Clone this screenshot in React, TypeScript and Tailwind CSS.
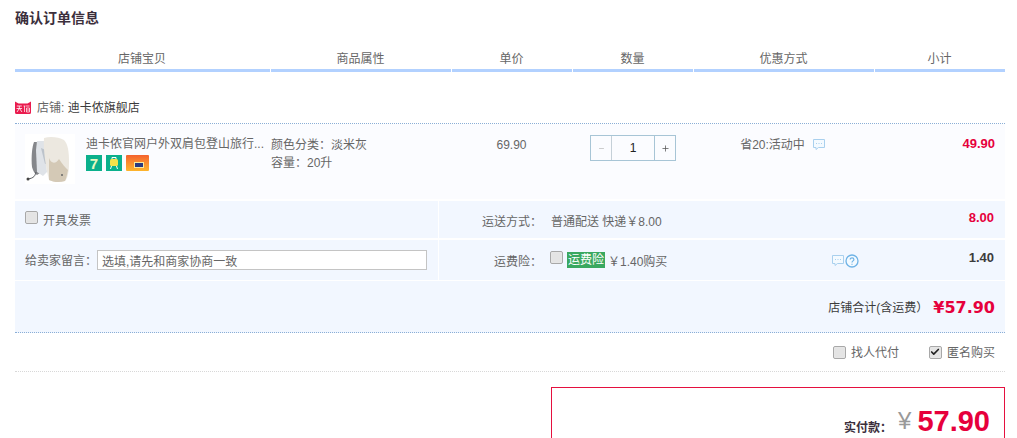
import { Check, Plus, Minus } from 'lucide-react';

const font = { fontFamily: '"Liberation Sans", "Noto Sans CJK SC", sans-serif' };

const columns = [
  { label: '店铺宝贝', width: 'w-[255px]' },
  { label: '商品属性', width: 'w-[180px]' },
  { label: '单价', width: 'w-[120px]' },
  { label: '数量', width: 'w-[120px]' },
  { label: '优惠方式', width: 'w-[180px]' },
  { label: '小计', width: 'w-[130px]' },
];

function ChatIcon({ className }: { className?: string }) {
  return (
    <svg viewBox="0 0 14 13" className={className} fill="none">
      <path d="M1.5 1.5h11v8h-6l-2.5 2v-2h-2.500z" stroke="#a9d0ee" strokeWidth="1" fill="#f4faff" />
      <path d="M4 5.500h1M6.500 5.500h1M9 5.500h1" stroke="#a9d0ee" strokeWidth="1" />
    </svg>
  );
}

function HelpIcon() {
  return (
    <svg viewBox="0 0 14 14" className="h-[14px] w-[14px]" fill="none">
      <circle cx="7" cy="7" r="6" stroke="#6fb3e6" strokeWidth="1.300" fill="#f4faff" />
      <path d="M5.200 5.500c0-2.300 3.700-2.300 3.700 0 0 1.400-1.900 1.400-1.900 3" stroke="#6fb3e6" strokeWidth="1.200" />
      <path d="M7 9.700v1.100" stroke="#6fb3e6" strokeWidth="1.200" />
    </svg>
  );
}

function TmallIcon() {
  return (
    <svg viewBox="0 0 16 13" className="h-[13px] w-[16px]">
      <path d="M0 0.500l3.500 2h9l3.500-2v11a1.500 1.500 0 0 1-1.500 1.500h-13a1.500 1.500 0 0 1-1.500-1.500z" fill="#ea1b4e" />
      <path d="M1.800 5h5M1.500 7.500h5.600M4.300 5v2.500l-2.300 3.500M4.500 7.500l2.500 3.500" stroke="#fff" strokeWidth="0.800" fill="none" />
      <path d="M8.500 5h2M9.500 5v6M11 5h3.500M11.500 7h3v4h-3zM11.500 9h3" stroke="#fff" strokeWidth="0.700" fill="none" />
    </svg>
  );
}

function Backpack() {
  return (
    <svg viewBox="0 0 50 50" className="h-[50px] w-[50px]">
      <rect width="50" height="50" fill="#ffffff" />
      <path d="M9 8c-2 5-3 16-2 25 1 4 3 7 5 8l3-2-1-31z" fill="#85878b" />
      <path d="M12 7l-1 9 1 22 6 4 4-4-3-31z" fill="#dfe3e8" />
      <path d="M16 14l7 3 2 12-5 1z" fill="#bcc3cb" />
      <path d="M19 4c6-2 15-1 20 2 4 4 5 12 5 22 0 9-1 16-4 19-6 2-12 1-16-1-3-12-6-30-5-42z" fill="#ece8e0" />
      <path d="M24 24c2 6 7 6 10 1 3 5 7 9 9 11-1 5-2 9-3 11-6 2-12 1-16-1z" fill="#d4c9b6" />
      <path d="M11 38c-1 4-2 6-8 7" stroke="#55585c" strokeWidth="1" fill="none" />
      <circle cx="3" cy="45" r="1.500" fill="#444" />
      <circle cx="37" cy="41" r="1" fill="#666" />
    </svg>
  );
}

function Checkbox({ checked }: { checked?: boolean }) {
  return (
    <span className="flex h-[13px] w-[13px] flex-none items-center justify-center rounded-[2px] border border-[#a8a8a8] bg-[#e4e4e4] shadow-[inset_0_0_1px_#fff]">
      {checked && <Check size={10} strokeWidth={4} color="#222" />}
    </span>
  );
}

export default function App() {
  return (
    <div style={font} className="h-[438px] w-[1017px] overflow-hidden bg-white pr-[12px] pl-[15px] text-[12px] text-[#666]">
      <h1 className="pt-[9px] text-[14px] leading-[18px] font-bold text-[#3c2f3c]">确认订单信息</h1>

      <div className="mt-[15px] flex gap-px">
        {columns.map((col) => (
          <div
            key={col.label}
            className={`${col.width} h-[30px] flex-none border-b-[3px] border-[#b2d1ff] pr-px text-center leading-[34px] text-[#666]`}
          >
            {col.label}
          </div>
        ))}
      </div>

      <div className="flex h-[52px] items-end border-b border-dotted border-[#8aaed6] pb-[7px]">
        <span className="mb-[2px]"><TmallIcon /></span>
        <span className="ml-[6px] leading-[16px] text-[#3c3c3c]"><span className="text-[#666]">店铺:</span> 迪卡侬旗舰店</span>
      </div>

      <div className="flex h-[75px] bg-[#fbfcff]">
        <div className="ml-[10px] mt-[10px] h-[50px] w-[50px] flex-none"><Backpack /></div>
        <div className="ml-[11px] w-[185px] flex-none pt-[12px]">
          <div className="leading-[16px] whitespace-nowrap">迪卡侬官网户外双肩包登山旅行...</div>
          <div className="mt-[3px] flex gap-[4px]">
            <span className="flex h-[16px] w-[16px] items-center justify-center bg-[#0bb08c] text-[15px] leading-none font-bold text-[#e8f8c0]">7</span>
            <span className="flex h-[16px] w-[16px] items-center justify-center bg-[#0bb08c]">
              <svg viewBox="0 0 16 16" className="h-[16px] w-[16px]">
                <rect x="4" y="4" width="8" height="7" rx="1.500" fill="#f6e24a" />
                <path d="M6 4V2.500h4V4M5.500 11l-1 3M10.500 11l1 3" stroke="#fff" strokeWidth="1" fill="none" />
              </svg>
            </span>
            <span className="flex h-[16px] w-[23px] items-end justify-end rounded-[1px] bg-gradient-to-b from-[#f4622f] to-[#fdb52c] pr-[5px] pb-[3px]">
              <span className="h-[6px] w-[10px] border border-[#f9e9a0] bg-[#2a3a80]" />
            </span>
          </div>
        </div>
        <div className="w-[180px] flex-none pt-[12px] leading-[18px]">
          <div>颜色分类：淡米灰</div>
          <div>容量：20升</div>
        </div>
        <div className="w-[121px] flex-none pt-[12px] text-center leading-[18px]">69.90</div>
        <div className="w-[121px] flex-none pt-[11px]">
          <div className="ml-[18px] flex h-[26px] w-[86px] border border-[#a7c5d6]">
            <span className="flex w-[21px] items-center justify-center border-r border-[#c5d0d8] text-[#aaa]"><Minus size={7} /></span>
            <span className="flex w-[43px] items-center justify-center border-r border-[#a7c5d6] text-[#222]">1</span>
            <span className="flex flex-1 items-center justify-center text-[#555]"><Plus size={9} /></span>
          </div>
        </div>
        <div className="flex w-[180px] flex-none items-start justify-center pt-[12px] leading-[18px]">
          省20:活动中
          <ChatIcon className="ml-[7px] mt-[2px] h-[13px] w-[14px]" />
        </div>
        <div className="flex-1 pt-[11px] pr-[10px] text-right text-[13px] leading-[18px] font-bold text-[#e6003c]">49.90</div>
      </div>

      <div className="mt-[2px] flex flex-col gap-[2px] text-[#666]">
        <div className="flex h-[37px] bg-[#f2f7ff]">
          <div className="flex w-[424px] flex-none items-start border-r-[1px] border-white pt-[10px] pl-[10px]">
            <Checkbox />
            <span className="ml-[5px] mt-[2px] leading-[16px]">开具发票</span>
          </div>
          <div className="w-[103px] flex-none pt-[12px] text-right leading-[18px]">运送方式：</div>
          <div className="ml-[9px] flex-1 pt-[12px] leading-[18px]">普通配送 快递￥8.00</div>
          <div className="pt-[8px] pr-[11px] text-[13px] leading-[18px] font-bold text-[#e6003c]">8.00</div>
        </div>

        <div className="flex h-[40px] bg-[#f2f7ff]">
          <div className="flex w-[424px] flex-none items-center border-r-[1px] border-white pl-[10px]">
            <span className="mt-[1px]">给卖家留言：</span>
            <input
              readOnly
              value="选填,请先和商家协商一致"
              className="h-[20px] w-[330px] border border-[#c4c4c4] bg-white px-[4px] text-[12px] text-[#666] outline-none"
            />
          </div>
          <div className="w-[103px] flex-none pt-[13px] text-right leading-[18px]">运费险：</div>
          <div className="ml-[8px] flex w-[281px] flex-none items-start pt-[11px] leading-[18px]">
            <Checkbox />
            <span className="mt-[1px] ml-[4px] h-[16px] bg-[#3aa860] px-px leading-[17px] text-white">运费险</span>
            <span className="mt-[2px] ml-[3px]">￥1.40购买</span>
          </div>
          <div className="flex pt-[14px]">
            <ChatIcon className="h-[13px] w-[14px]" />
            <HelpIcon />
          </div>
          <div className="flex-1 pt-[9px] pr-[11px] text-right text-[13px] leading-[18px] font-bold text-[#3c3c3c]">1.40</div>
        </div>
      </div>

      <div className="mt-px flex h-[52px] items-center justify-end border-b border-dotted border-[#8aaed6] bg-[#f2f7ff] pr-[10px]">
        <span className="mt-[2px] text-[#3c3c3c]">店铺合计(含运费）</span>
        <span className="mt-[2px] ml-[5px] text-[16px] leading-none font-bold text-[#e6003c]" style={{ fontFamily: '"DejaVu Sans", sans-serif' }}>¥57.90</span>
      </div>

      <div className="flex h-[39px] items-center justify-end gap-[30px] border-b border-dotted border-[#d8d8d8] pr-[10px]">
        <span className="flex items-center gap-[5px]"><Checkbox /><span className="mt-[2px]">找人代付</span></span>
        <span className="flex items-center gap-[5px]"><Checkbox checked /><span className="mt-[2px]">匿名购买</span></span>
      </div>

      <div className="mt-[15px] ml-[536px] flex h-[70px] items-start justify-end border border-solid border-[#e5103f] pt-[18px] pr-[14px]">
        <span className="mt-[13px] font-bold text-[#3c2f3c]">实付款：</span>
        <span className="ml-[6px] text-[24px] leading-[30px] text-[#999]">¥</span>
        <span className="ml-[6px] text-[29px] leading-[30px] font-bold text-[#e6003c]">57.90</span>
      </div>
    </div>
  );
}
